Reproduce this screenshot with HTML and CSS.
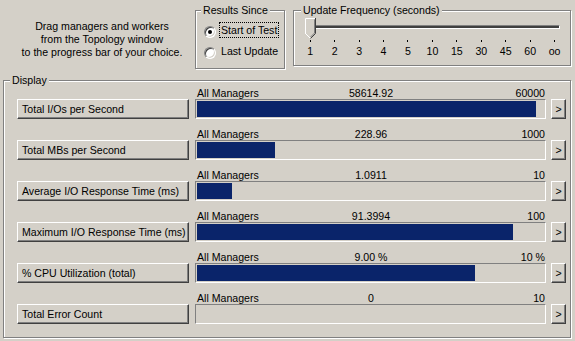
FILE: index.html
```html
<!DOCTYPE html>
<html>
<head>
<meta charset="utf-8">
<link rel="stylesheet" href="styles.css">
</head>
<body>
<div class="top">
  <p class="hint">Drag managers and workers<br>from the Topology window<br>to the progress bar of your choice.</p>
  <fieldset class="group results">
    <legend>Results Since</legend>
    <div class="radio-row"><span class="radio checked"></span><span class="radio-text focus">Start of Test</span></div>
    <div class="radio-row"><span class="radio"></span><span class="radio-text">Last Update</span></div>
  </fieldset>
  <fieldset class="group freq">
    <legend>Update Frequency (seconds)</legend>
    <div class="slider">
      <div class="track"></div>
      <svg class="thumb" width="11" height="21" viewBox="0 0 11 21">
        <path d="M0.5 0.5H10.5V15.5L5.5 20.5L0.5 15.5Z" fill="#d4d0c8"/>
        <path d="M0.5 16V0.5H10" fill="none" stroke="#fff"/>
        <path d="M0.5 15.5L5.5 20.5" fill="none" stroke="#fff"/>
        <path d="M10.5 0V15.5L5.5 20.5" fill="none" stroke="#404040"/>
        <path d="M9.5 1.5V15L5.5 19" fill="none" stroke="#808080"/>
      </svg>
      <div class="ticks">
        <div class="tick"><span class="mark"></span><span class="tick-label">1</span></div>
        <div class="tick"><span class="mark"></span><span class="tick-label">2</span></div>
        <div class="tick"><span class="mark"></span><span class="tick-label">3</span></div>
        <div class="tick"><span class="mark"></span><span class="tick-label">4</span></div>
        <div class="tick"><span class="mark"></span><span class="tick-label">5</span></div>
        <div class="tick"><span class="mark"></span><span class="tick-label">10</span></div>
        <div class="tick"><span class="mark"></span><span class="tick-label">15</span></div>
        <div class="tick"><span class="mark"></span><span class="tick-label">30</span></div>
        <div class="tick"><span class="mark"></span><span class="tick-label">45</span></div>
        <div class="tick"><span class="mark"></span><span class="tick-label">60</span></div>
        <div class="tick"><span class="mark"></span><span class="tick-label">oo</span></div>
      </div>
    </div>
  </fieldset>
</div>
<fieldset class="group display">
  <legend>Display</legend>
  <div class="rows">
    <div class="row">
      <button class="btn stat">Total I/Os per Second</button>
      <div class="bar-head"><span>All Managers</span><span>58614.92</span><span>60000</span></div>
      <div class="bar"><div class="fill" style="width:97.7%"></div></div>
      <button class="btn more">&gt;</button>
    </div>
    <div class="row">
      <button class="btn stat">Total MBs per Second</button>
      <div class="bar-head"><span>All Managers</span><span>228.96</span><span>1000</span></div>
      <div class="bar"><div class="fill" style="width:22.6%"></div></div>
      <button class="btn more">&gt;</button>
    </div>
    <div class="row">
      <button class="btn stat">Average I/O Response Time (ms)</button>
      <div class="bar-head"><span>All Managers</span><span>1.0911</span><span>10</span></div>
      <div class="bar"><div class="fill" style="width:10.1%"></div></div>
      <button class="btn more">&gt;</button>
    </div>
    <div class="row">
      <button class="btn stat">Maximum I/O Response Time (ms)</button>
      <div class="bar-head"><span>All Managers</span><span>91.3994</span><span>100</span></div>
      <div class="bar"><div class="fill" style="width:91.2%"></div></div>
      <button class="btn more">&gt;</button>
    </div>
    <div class="row">
      <button class="btn stat">% CPU Utilization (total)</button>
      <div class="bar-head"><span>All Managers</span><span>9.00 %</span><span>10 %</span></div>
      <div class="bar"><div class="fill" style="width:80%"></div></div>
      <button class="btn more">&gt;</button>
    </div>
    <div class="row">
      <button class="btn stat">Total Error Count</button>
      <div class="bar-head"><span>All Managers</span><span>0</span><span>10</span></div>
      <div class="bar"><div class="fill" style="width:0%"></div></div>
      <button class="btn more">&gt;</button>
    </div>
  </div>
</fieldset>
</body>
</html>
```
FILE: styles.css
```css
* { box-sizing: border-box; }

body {
  margin: 0;
  width: 575px;
  height: 341px;
  overflow: hidden;
  background: #d4d0c8;
  color: #000;
  font-family: "Liberation Sans", Arial, sans-serif;
  font-size: 10.6px;
  line-height: 13px;
}

.top {
  display: flex;
  align-items: flex-start;
  height: 74px;
  padding-top: 4px;
}

.hint {
  margin: 0;
  width: 195px;
  padding: 16px 0 0 9px;
  text-align: center;
  line-height: 13px;
}

.group {
  margin: 0;
  min-width: 0;
  border: 1px solid #808080;
  box-shadow: inset 1px 1px #fff, 1px 1px #fff;
}

.group legend {
  padding: 0 2px;
  line-height: 13px;
  background: #d4d0c8;
}

.results {
  width: 90px;
  height: 65px;
  padding: 5px 0 0 5px;
}

.radio-row {
  display: flex;
  align-items: flex-start;
  height: 21px;
}

.radio {
  position: relative;
  flex: none;
  width: 12px;
  height: 12px;
  margin: 4px 3px 0 3px;
  border-radius: 50%;
  border: 1px solid;
  border-color: #808080 #fff #fff #808080;
  box-shadow: inset 1px 1px #404040, inset -1px -1px #d4d0c8;
  background: #fff;
}

.radio.checked::after {
  content: "";
  position: absolute;
  left: 3px;
  top: 3px;
  width: 4px;
  height: 4px;
  border-radius: 50%;
  background: #000;
}

.radio-text {
  border: 1px dotted transparent;
  padding: 1px 1px 0;
  line-height: 13px;
  white-space: nowrap;
}

.radio-text.focus { border-color: #000; }

.freq {
  width: 278px;
  height: 62px;
  margin-left: 8px;
  padding: 0 0 0 7px;
}

.slider {
  position: relative;
  width: 255px;
  margin: 1px 0 0 4px;
  padding-top: 7px;
}

.track {
  height: 4px;
  border: 1px solid;
  border-color: #808080 #fff #fff #808080;
  background: #404040;
}

.thumb {
  position: absolute;
  left: 0;
  top: 0;
}

.ticks {
  display: grid;
  grid-template-columns: repeat(11, 24.45px);
  margin: 11px 0 0 -7px;
}

.tick {
  display: flex;
  flex-direction: column;
  align-items: center;
}

.mark {
  width: 1px;
  height: 2px;
  background: #000;
}

.tick-label {
  margin-top: 3px;
  line-height: 13px;
}

.display {
  width: 568px;
  height: 264px;
  margin-left: 3px;
  padding: 0 0 0 6px;
}

.rows {
  display: flex;
  flex-direction: column;
  gap: 9px;
  margin-left: 7px;
}

.row {
  display: grid;
  grid-template-columns: 172px 6px 351px 5px 15px;
  grid-template-rows: 12px 20px;
  grid-template-areas:
    ". . head . ."
    "btn . bar . more";
}

.btn {
  margin: 0;
  height: 20px;
  border: 1px solid;
  border-color: #fff #404040 #404040 #fff;
  box-shadow: inset -1px -1px #808080;
  background: #d4d0c8;
  color: #000;
  font: inherit;
  line-height: 13px;
  white-space: nowrap;
}

.stat {
  grid-area: btn;
  padding: 0 0 0 4px;
  text-align: left;
}

.more {
  grid-area: more;
  padding: 0;
  text-align: center;
}

.bar-head {
  grid-area: head;
  display: grid;
  grid-template-columns: 1fr auto 1fr;
  padding: 0 1px 0 2px;
  line-height: 12px;
  white-space: nowrap;
}

.bar-head span:last-child { justify-self: end; }

.bar {
  grid-area: bar;
  height: 20px;
  padding: 1px;
  border: 1px solid;
  border-color: #808080 #fff #fff #808080;
}

.fill {
  height: 100%;
  background: #0a246a;
}
```
